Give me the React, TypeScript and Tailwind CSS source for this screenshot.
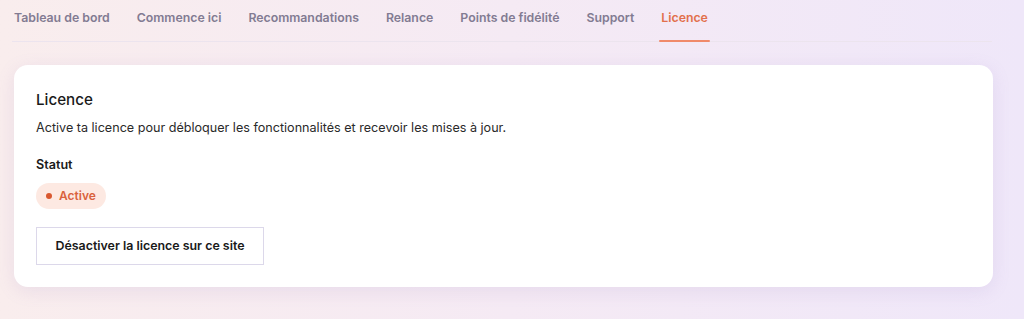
import React from "react";

const tabs = [
  "Tableau de bord",
  "Commence ici",
  "Recommandations",
  "Relance",
  "Points de fidélité",
  "Support",
  "Licence",
];

export default function App() {
  return (
    <div
      className="w-[1024px] h-[319px] overflow-hidden bg-gradient-to-r from-[#f9eded] via-[#f5eaf4] to-[#efe7f9] px-[12px]"
      style={{ fontFamily: "Inter, 'Noto Sans', sans-serif" }}
    >
      <div className="flex gap-[27px] border-b border-[#ece4ee] pl-[2px] w-[980px]">
        {tabs.map((t) => {
          const active = t === "Licence";
          return (
            <div
              key={t}
              className={`relative pt-[9px] pb-[14px] text-[12.3px] leading-[18px] font-semibold ${
                active ? "text-[#e2704c]" : "text-[#827b92]"
              }`}
            >
              {t}
              {active && (
                <div className="absolute left-[-2px] right-[-2px] bottom-[-1px] h-[2px] bg-[#f08a6a] rounded" />
              )}
            </div>
          );
        })}
      </div>

      <div className="mt-[23px] ml-[2px] w-[979px] h-[222px] rounded-[14px] bg-white shadow-[0_4px_18px_rgba(150,120,190,0.14)] px-[22px] pt-[25px]">
        <div className="text-[15.2px] font-medium text-[#1a1a1a] leading-[20px]">Licence</div>
        <div className="mt-[9px] text-[12.6px] text-[#2a2a2a] leading-[18px]">
          Active ta licence pour débloquer les fonctionnalités et recevoir les mises à jour.
        </div>
        <div className="mt-[19px] text-[12.6px] font-semibold text-[#1a1a1a] leading-[18px]">Statut</div>
        <div className="mt-[9px] inline-flex items-center gap-[7px] h-[26px] pl-[10px] pr-[10px] rounded-full bg-[#fde9e2] text-[12px] font-semibold text-[#d9623e]">
          <span className="w-[6px] h-[6px] rounded-full bg-[#d9582f]" />
          Active
        </div>
        <div>
          <button className="mt-[18px] w-[228px] h-[38px] border border-[#dcd8ea] bg-white text-[12.4px] font-semibold text-[#1a1a1a]">
            Désactiver la licence sur ce site
          </button>
        </div>
      </div>
    </div>
  );
}
